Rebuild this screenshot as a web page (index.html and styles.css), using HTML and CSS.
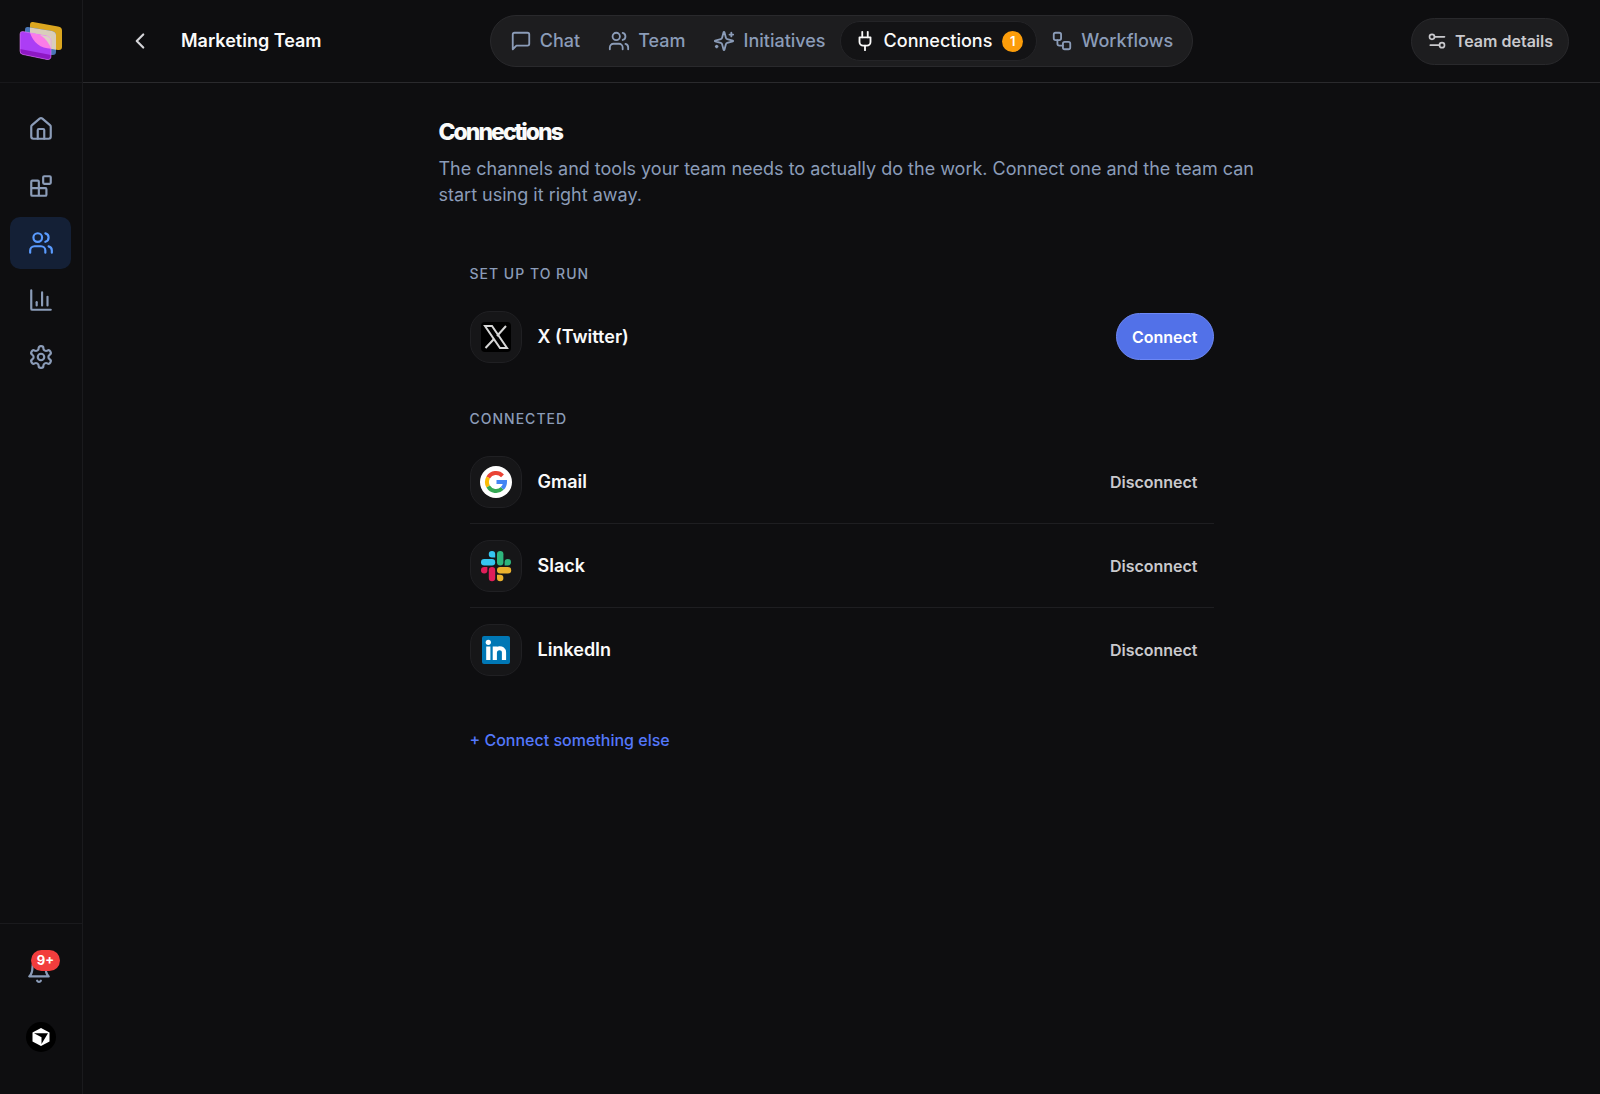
FILE: index.html
```html
<!DOCTYPE html>
<html lang="en">
<head>
    <meta charset="UTF-8">
    <meta name="viewport" content="width=device-width, initial-scale=1.0">
    <title>Marketing Team - Connections</title>
    <link rel="stylesheet" href="styles.css">
</head>
<body>
    <aside class="sidebar">
        <a href="#" class="logo" aria-label="Home page">
            <svg width="44" height="40" viewBox="0 0 44 40">
                <path d="M14 1 L39 5.5 Q43 6 43 9.500 V26 Q43 29.500 39 29 L14 24.500 Q11 24 11 21 V4 Q11 .5 14 1Z" fill="#dba61f"/>
                <path d="M9 6 L33 10 Q37 11 37 14 V31 Q37 34.500 33 34 L9 29 Q6 28 6 25 V9 Q6 5.500 9 6Z" fill="#4a76b5"/>
                <path d="M11 6.400 L33 10 Q37 11 37 14 V28.700 L14 24.500 Q11 24 11 21Z" fill="#d9cdbb"/>
                <path d="M4 10.500 L28 15 Q32 16 32 19 V35 Q32 39 28 38.500 L4 33.500 Q1 33 1 30 V13 Q1 10 4 10.500Z" fill="#ac3df5"/>
                <path d="M1 28 L32 34 V35 Q32 39 28 38.500 L4 33.500 Q1 33 1 30Z" fill="#8e18c4"/>
                <path d="M11 11.800 L28 15 Q32 16 32 19 V27.800 Q16 27 11 11.800Z" fill="#fb7ce8"/>
                <path d="M21 13.700 L32 15.500 V27.500 Q29 19 21 13.700Z" fill="#ded0c4"/>
                <path d="M4 10.500 L28 15 Q32 16 32 19 V35 Q32 39 28 38.500 L4 33.500 Q1 33 1 30 V13 Q1 10 4 10.500Z" fill="none" stroke="#ef8cff" stroke-opacity=".5"/>
            </svg>
        </a>
        <nav class="side-nav">
            <a href="#" class="side-link" aria-label="Home">
                <svg class="icon" viewBox="0 0 24 24"><path d="M15 21v-8a1 1 0 0 0-1-1h-4a1 1 0 0 0-1 1v8"/><path d="M3 10a2 2 0 0 1 .709-1.528l7-5.999a2 2 0 0 1 2.582 0l7 5.999A2 2 0 0 1 21 10v9a2 2 0 0 1-2 2H5a2 2 0 0 1-2-2z"/></svg>
            </a>
            <a href="#" class="side-link" aria-label="Apps">
                <svg class="icon" viewBox="0 0 24 24"><rect width="7" height="7" x="14" y="3" rx="1"/><path d="M10 21V8a1 1 0 0 0-1-1H4a1 1 0 0 0-1 1v12a1 1 0 0 0 1 1h12a1 1 0 0 0 1-1v-5a1 1 0 0 0-1-1H3"/></svg>
            </a>
            <a href="#" class="side-link active" aria-label="Teams">
                <svg class="icon" viewBox="0 0 24 24"><path d="M16 21v-2a4 4 0 0 0-4-4H6a4 4 0 0 0-4 4v2"/><circle cx="9" cy="7" r="4"/><path d="M22 21v-2a4 4 0 0 0-3-3.870"/><path d="M16 3.130a4 4 0 0 1 0 7.750"/></svg>
            </a>
            <a href="#" class="side-link" aria-label="Reports">
                <svg class="icon" viewBox="0 0 24 24"><path d="M3 3v17a1 1 0 0 0 1 1h17"/><path d="M18 17V9"/><path d="M13 17V5"/><path d="M8 17v-3"/></svg>
            </a>
            <a href="#" class="side-link" aria-label="Settings">
                <svg class="icon" viewBox="0 0 24 24"><path d="M12.220 2h-.44a2 2 0 0 0-2 2v.18a2 2 0 0 1-1 1.730l-.43.25a2 2 0 0 1-2 0l-.15-.08a2 2 0 0 0-2.730.73l-.22.38a2 2 0 0 0 .73 2.730l.15.1a2 2 0 0 1 1 1.720v.51a2 2 0 0 1-1 1.740l-.15.09a2 2 0 0 0-.73 2.730l.22.38a2 2 0 0 0 2.730.73l.15-.08a2 2 0 0 1 2 0l.43.25a2 2 0 0 1 1 1.730V20a2 2 0 0 0 2 2h.44a2 2 0 0 0 2-2v-.18a2 2 0 0 1 1-1.730l.43-.25a2 2 0 0 1 2 0l.15.08a2 2 0 0 0 2.730-.73l.22-.39a2 2 0 0 0-.73-2.730l-.15-.08a2 2 0 0 1-1-1.740v-.5a2 2 0 0 1 1-1.740l.15-.09a2 2 0 0 0 .73-2.730l-.22-.38a2 2 0 0 0-2.730-.73l-.15.08a2 2 0 0 1-2 0l-.43-.25a2 2 0 0 1-1-1.730V4a2 2 0 0 0-2-2z"/><circle cx="12" cy="12" r="3"/></svg>
            </a>
        </nav>
        <div class="side-bottom">
            <button type="button" class="bell" aria-label="Notifications">
                <svg class="icon" viewBox="0 0 24 24"><path d="M10.268 21a2 2 0 0 0 3.464 0"/><path d="M18 8A6 6 0 0 0 6 8c0 7-3 9-3 9h18s-3-2-3-9"/></svg>
                <span class="bell-count">9+</span>
            </button>
            <button type="button" class="avatar" aria-label="Account">
                <svg width="20" height="20" viewBox="0 0 20 20"><path d="M10 1 L18.500 5.500 V14.500 L10 19 L1.500 14.500 V5.500Z" fill="#fff"/><path d="M3 6.300 H17 L10.500 17 V10.300Z" fill="#000"/></svg>
            </button>
        </div>
    </aside>

    <div class="page">
        <header class="topbar">
            <div class="topbar-left">
                <a href="#" class="back" aria-label="Back">
                    <svg class="icon" viewBox="0 0 24 24"><path d="m15 18-6-6 6-6"/></svg>
                </a>
                <h1>Marketing Team</h1>
            </div>
            <nav class="tabs">
                <a href="#" class="tab">
                    <svg class="icon" viewBox="0 0 24 24"><path d="M21 15a2 2 0 0 1-2 2H7l-4 4V5a2 2 0 0 1 2-2h14a2 2 0 0 1 2 2z"/></svg>
                    Chat
                </a>
                <a href="#" class="tab">
                    <svg class="icon" viewBox="0 0 24 24"><path d="M16 21v-2a4 4 0 0 0-4-4H6a4 4 0 0 0-4 4v2"/><circle cx="9" cy="7" r="4"/><path d="M22 21v-2a4 4 0 0 0-3-3.870"/><path d="M16 3.130a4 4 0 0 1 0 7.750"/></svg>
                    Team
                </a>
                <a href="#" class="tab">
                    <svg class="icon" viewBox="0 0 24 24"><path d="M9.937 15.500A2 2 0 0 0 8.500 14.063l-6.135-1.582a.5.5 0 0 1 0-.962L8.500 9.936A2 2 0 0 0 9.937 8.500l1.582-6.135a.5.5 0 0 1 .963 0L14.063 8.500A2 2 0 0 0 15.500 9.937l6.135 1.581a.5.5 0 0 1 0 .964L15.500 14.063a2 2 0 0 0-1.437 1.437l-1.582 6.135a.5.5 0 0 1-.963 0z"/><path d="M20 3v4"/><path d="M22 5h-4"/><path d="M4 17v2"/><path d="M5 18H3"/></svg>
                    Initiatives
                </a>
                <a href="#" class="tab active">
                    <svg class="icon" viewBox="0 0 24 24"><path d="M12 22v-5"/><path d="M9 8V2"/><path d="M15 8V2"/><path d="M18 8v5a4 4 0 0 1-4 4h-4a4 4 0 0 1-4-4V8Z"/></svg>
                    Connections
                    <span class="tab-count">1</span>
                </a>
                <a href="#" class="tab">
                    <svg class="icon" viewBox="0 0 24 24"><rect width="8" height="8" x="3" y="3" rx="2"/><path d="M7 11v4a2 2 0 0 0 2 2h4"/><rect width="8" height="8" x="13" y="13" rx="2"/></svg>
                    Workflows
                </a>
            </nav>
            <div class="topbar-right">
                <button type="button" class="btn btn-dark">
                    <svg class="icon" viewBox="0 0 24 24"><path d="M9 7h12"/><path d="M15 17H4"/><circle cx="6" cy="7" r="3"/><circle cx="18" cy="17" r="3"/></svg>
                    Team details
                </button>
            </div>
        </header>

        <main class="content">
            <h2>Connections</h2>
            <p class="intro">The channels and tools your team needs to actually do the work. Connect one and the team can start using it right away.</p>

            <section class="group">
                <h3>Set up to run</h3>
                <ul>
                    <li>
                        <span class="tile">
                            <svg width="32" height="32" viewBox="0 0 32 32"><rect x="1" y="1" width="30" height="30" rx="4" fill="#000"/><path d="M5 5h7l15 22h-7z" fill="none" stroke="#d6d6d6" stroke-width="2"/><path d="M26 5l-9 10M14 18l-8.500 9" stroke="#d6d6d6" stroke-width="2"/></svg>
                        </span>
                        <span class="name">X (Twitter)</span>
                        <button type="button" class="btn btn-primary">Connect</button>
                    </li>
                </ul>
            </section>

            <section class="group">
                <h3>Connected</h3>
                <ul>
                    <li>
                        <span class="tile">
                            <svg width="32" height="32" viewBox="0 0 32 32"><circle cx="16" cy="16" r="16" fill="#fff"/><g fill="none" stroke-width="4"><path d="M8.200 11.500A9 9 0 0 1 22.500 9.800" stroke="#ea4335"/><path d="M8.200 20.500A9 9 0 0 1 8.200 11.500" stroke="#fbbc05"/><path d="M22.300 22.400A9 9 0 0 1 8.200 20.500" stroke="#34a853"/><path d="M16.500 16H25A9 9 0 0 1 22.300 22.400" stroke="#4285f4"/></g></svg>
                        </span>
                        <span class="name">Gmail</span>
                        <button type="button" class="btn">Disconnect</button>
                    </li>
                    <li>
                        <span class="tile">
                            <svg width="32" height="32" viewBox="0 0 32 32">
                                <path d="M12 1a3.200 3.200 0 0 0 0 6.500h3.200V4.200A3.200 3.200 0 0 0 12 1z" fill="#36c5f0"/><rect x="1" y="9" width="14.200" height="6.400" rx="3.200" fill="#36c5f0"/>
                                <rect x="17" y="1" width="6.400" height="14.400" rx="3.200" fill="#2eb67d"/><path d="M31 12.200a3.200 3.200 0 0 0-6.400 0v3.200h3.200a3.200 3.200 0 0 0 3.200-3.200z" fill="#2eb67d"/>
                                <path d="M1 20.200a3.200 3.200 0 0 0 6.400 0V17H4.200A3.200 3.200 0 0 0 1 20.200z" fill="#e01e5a"/><rect x="8.800" y="17" width="6.400" height="14.200" rx="3.200" fill="#e01e5a"/>
                                <rect x="17" y="17" width="14.200" height="6.400" rx="3.200" fill="#ecb22e"/><path d="M20.200 31.200a3.200 3.200 0 0 0 0-6.400H17V28a3.200 3.200 0 0 0 3.200 3.200z" fill="#ecb22e"/>
                            </svg>
                        </span>
                        <span class="name">Slack</span>
                        <button type="button" class="btn">Disconnect</button>
                    </li>
                    <li>
                        <span class="tile">
                            <svg width="32" height="32" viewBox="0 0 32 32"><rect x="2" y="2" width="28" height="28" rx="2" fill="#0077b5"/><circle cx="8.300" cy="8.300" r="2.600" fill="#fff"/><path d="M8.300 12.500V26M14.800 26V12.500M14.800 19C14.800 13 24 12.500 24 18.500V26" fill="none" stroke="#fff" stroke-width="4.200"/></svg>
                        </span>
                        <span class="name">LinkedIn</span>
                        <button type="button" class="btn">Disconnect</button>
                    </li>
                </ul>
            </section>

            <a href="#" class="more">+ Connect something else</a>
        </main>
    </div>
</body>
</html>
```
FILE: styles.css
```css
* {
    box-sizing: border-box;
}
body {
    display: flex;
    min-height: 100vh;
    margin: 0;
    background: #0e0e10;
    color: #fafafa;
    font-family: Inter, "Liberation Sans", sans-serif;
    font-size: 18px;
    line-height: 26px;
}
h1, h2, h3, p, ul {
    margin: 0;
    padding: 0;
}
a {
    text-decoration: none;
}
button {
    padding: 0;
    border: none;
    background: none;
    font-family: inherit;
    cursor: pointer;
}
svg {
    display: block;
}
.icon {
    width: 22px;
    height: 22px;
    flex-shrink: 0;
    fill: none;
    stroke: currentColor;
    stroke-width: 2;
    stroke-linecap: round;
    stroke-linejoin: round;
}

/* sidebar */
.sidebar {
    position: sticky;
    top: 0;
    display: flex;
    flex-direction: column;
    flex-shrink: 0;
    width: 83px;
    height: 100vh;
    border-right: 1px solid #1a1a1d;
}
.logo {
    display: flex;
    align-items: center;
    justify-content: center;
    height: 83px;
    border-bottom: 1px solid #18181b;
}
.side-nav {
    display: flex;
    flex: 1;
    flex-direction: column;
    gap: 5px;
    padding: 20px 11px 20px 10px;
}
.side-link {
    display: flex;
    align-items: center;
    justify-content: center;
    height: 52px;
    border-radius: 10px;
    color: #8b9cb8;
}
.side-link.active {
    background: #142036;
    color: #5a9bff;
}
.side-link .icon, .bell .icon {
    width: 26px;
    height: 26px;
}
.side-bottom {
    display: flex;
    flex-direction: column;
    align-items: center;
    gap: 35px;
    padding: 22px 0 42px;
    border-top: 1px solid #1a1a1d;
}
.bell {
    position: relative;
    padding: 12px 4px 3px 0;
    color: #8b9cb8;
}
.bell-count {
    position: absolute;
    top: 4px;
    left: 5px;
    width: 29px;
    height: 21px;
    border-radius: 11px;
    background: #f23d3d;
    color: #fff;
    font-size: 13px;
    font-weight: 700;
    line-height: 21px;
}
.avatar {
    display: flex;
    align-items: center;
    justify-content: center;
    width: 30px;
    height: 30px;
    border-radius: 50%;
    background: #000;
}

/* top bar */
.page {
    flex: 1;
    min-width: 0;
}
.topbar {
    display: grid;
    grid-template-columns: 1fr auto 1fr;
    align-items: center;
    height: 83px;
    padding: 0 31px;
    border-bottom: 1px solid #2a2a2d;
}
.topbar-left {
    display: flex;
    align-items: center;
    gap: 28px;
    padding-left: 13px;
}
.topbar-right {
    display: flex;
    justify-content: flex-end;
}
.back {
    color: #d4d4d8;
}
.back .icon {
    width: 26px;
    height: 26px;
}
.topbar h1 {
    font-size: 18px;
    font-weight: 600;
}
.tabs {
    display: flex;
    height: 52px;
    padding: 5px;
    border: 1px solid #29292c;
    border-radius: 26px;
    background: #1d1d1f;
}
.tab {
    display: flex;
    align-items: center;
    gap: 8px;
    padding: 0 13px;
    border: 1px solid transparent;
    border-radius: 20px;
    color: #8b9cb8;
    font-weight: 500;
}
.tab.active {
    border-color: #242427;
    background: #131315;
    color: #fafafa;
}
.tab-count {
    width: 21px;
    height: 21px;
    margin-left: 2px;
    border-radius: 50%;
    background: #fc9d0a;
    color: #fff;
    font-size: 13px;
    font-weight: 600;
    line-height: 21px;
    text-align: center;
}

/* buttons */
.btn {
    display: flex;
    align-items: center;
    gap: 8px;
    height: 47px;
    padding: 0 15px;
    border: 1px solid transparent;
    border-radius: 24px;
    color: #c9c9cd;
    font-size: 16px;
    font-weight: 600;
}
.btn .icon {
    width: 20px;
    height: 20px;
}
.btn-dark {
    border-color: #29292c;
    background: #1d1d1f;
}
.btn-primary {
    border-color: #6d88f5;
    background: #5271e8;
    color: #fff;
}

/* content */
.content {
    max-width: 806px;
    margin: 0 auto;
    padding: 35px 0;
}
.content h2 {
    font-size: 23px;
    font-weight: 800;
    line-height: 28px;
    letter-spacing: -2px;
}
.intro {
    margin: 10px -16px 0 0;
    color: #8b9cb8;
}
.group {
    margin-top: 53px;
    padding: 0 31px;
}
.group + .group {
    margin-top: 27px;
}
.group h3 {
    margin-bottom: 8px;
    color: #8b9cb8;
    font-size: 14px;
    font-weight: 500;
    line-height: 26px;
    letter-spacing: 1px;
    text-transform: uppercase;
}
.group li {
    display: flex;
    align-items: center;
    gap: 16px;
    height: 84px;
    border-bottom: 1px solid #1e1e21;
}
.group li:last-child {
    border-bottom-color: transparent;
}
.tile {
    display: flex;
    align-items: center;
    justify-content: center;
    width: 52px;
    height: 52px;
    border: 1px solid #202023;
    border-radius: 20px;
    background: #161618;
}
.name {
    flex: 1;
    font-weight: 600;
}
.more {
    display: inline-block;
    margin: 35px 31px 0;
    color: #5478fb;
    font-size: 16px;
    font-weight: 500;
}
```
